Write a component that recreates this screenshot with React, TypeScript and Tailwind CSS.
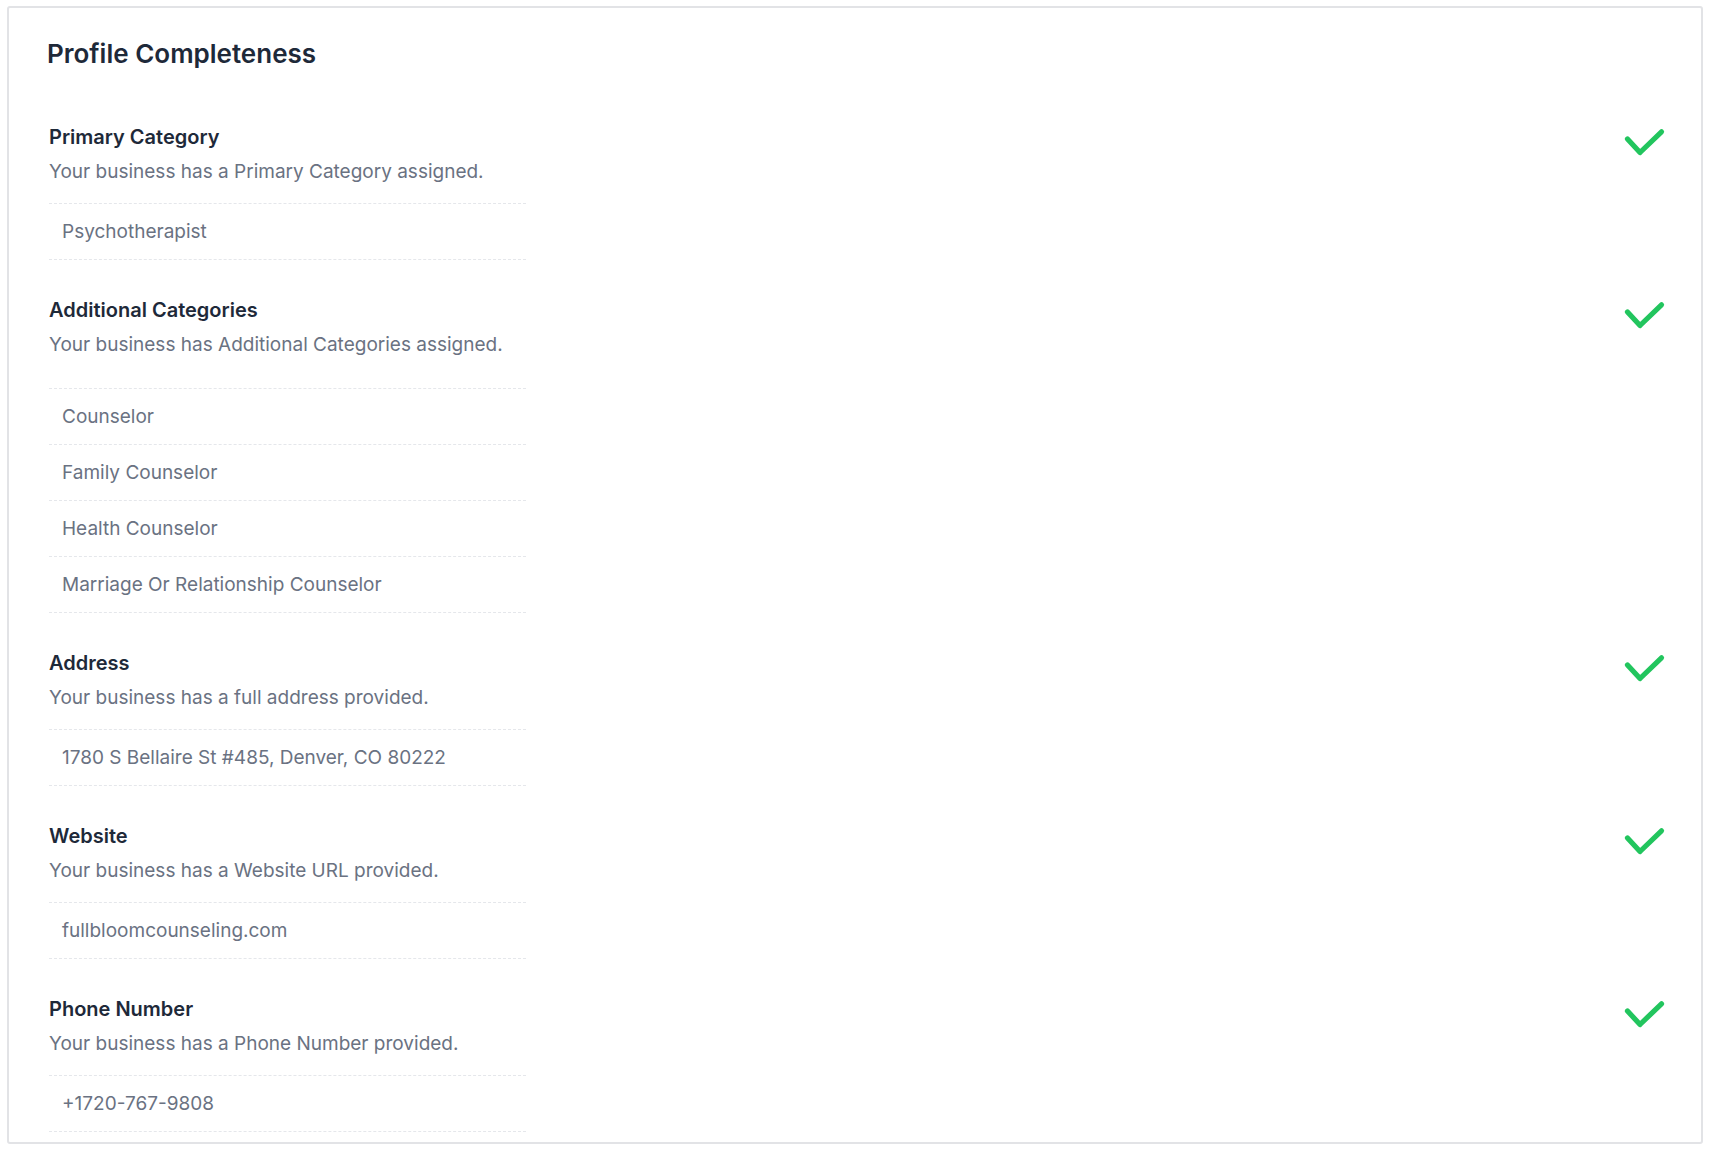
import React from "react";

type Section = {
  title: string;
  desc: string;
  items: string[];
  listGap?: boolean;
};

const sections: Section[] = [
  {
    title: "Primary Category",
    desc: "Your business has a Primary Category assigned.",
    items: ["Psychotherapist"],
  },
  {
    title: "Additional Categories",
    desc: "Your business has Additional Categories assigned.",
    items: [
      "Counselor",
      "Family Counselor",
      "Health Counselor",
      "Marriage Or Relationship Counselor",
    ],
    listGap: true,
  },
  {
    title: "Address",
    desc: "Your business has a full address provided.",
    items: ["1780 S Bellaire St #485, Denver, CO 80222"],
  },
  {
    title: "Website",
    desc: "Your business has a Website URL provided.",
    items: ["fullbloomcounseling.com"],
  },
  {
    title: "Phone Number",
    desc: "Your business has a Phone Number provided.",
    items: ["+1720-767-9808"],
  },
];

function CheckMark() {
  return (
    <svg width="50" height="36" viewBox="0 0 50 36" fill="none" className="mt-[2px] shrink-0">
      <polyline
        points="7.5,14 20,27.5 41.5,6.8"
        stroke="#22c55e"
        strokeWidth="5.2"
        strokeLinecap="round"
        strokeLinejoin="round"
      />
    </svg>
  );
}

export default function App() {
  return (
    <div
      className="bg-white px-[7px] pt-[6px] pb-[7px]"
      style={{ fontFamily: "Inter, 'Noto Sans', sans-serif" }}
    >
      <div className="border-2 border-[#e2e3e6] rounded-[3px] pt-[30px] pl-[39px] pr-[31px] pb-[10px]">
        <h2 className="text-[26px] leading-8 font-semibold text-gray-800 -ml-[1px]">
          Profile Completeness
        </h2>
        <div className="mt-[53px] flex flex-col gap-9 pl-[1px]">
          {sections.map((s) => (
            <div key={s.title} className="flex items-start justify-between">
              <div className="w-[477px]">
                <div className="text-[20px] leading-7 font-semibold text-gray-800">
                  {s.title}
                </div>
                <div className="mt-[7px] text-[19px] leading-7 text-gray-500">{s.desc}</div>
                <ul
                  className={`${s.listGap ? "mt-[29px]" : "mt-[17px]"} border-t border-dashed border-[#e5e7eb]`}
                >
                  {s.items.map((it) => (
                    <li
                      key={it}
                      className="border-b border-dashed border-[#e5e7eb] pl-[13px] pt-[14px] pb-[13px] text-[19px] leading-7 text-gray-500"
                    >
                      {it}
                    </li>
                  ))}
                </ul>
              </div>
              <CheckMark />
            </div>
          ))}
        </div>
      </div>
    </div>
  );
}
